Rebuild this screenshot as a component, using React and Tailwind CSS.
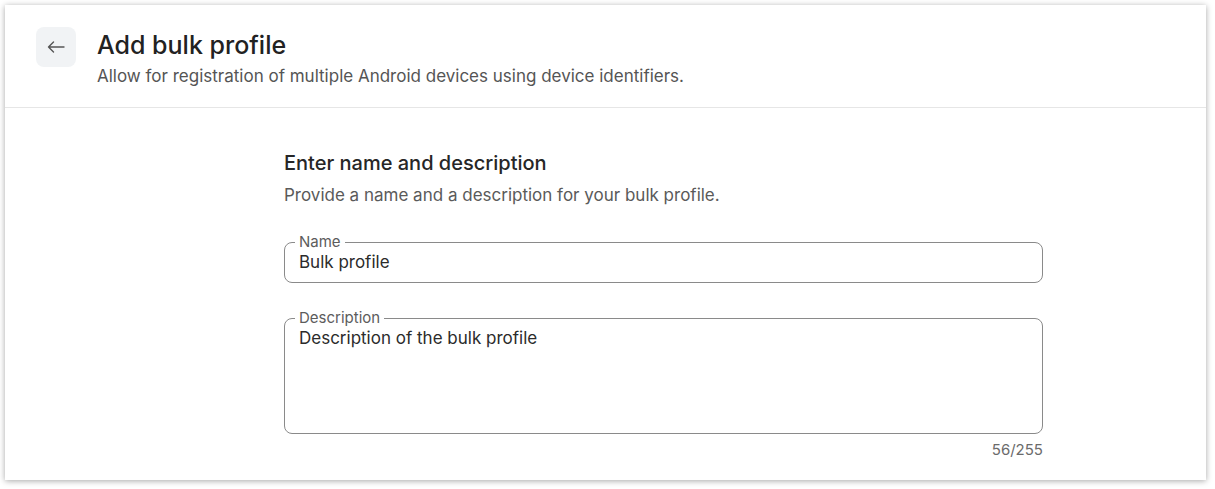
import React from 'react';

function OutlinedField({ label, value, multiline }) {
  return (
    <fieldset className="border border-[#8a8a8a] rounded-lg px-[14px] m-0">
      <legend className="px-[4px] -ml-[4px] text-[15px] leading-[14px] text-[#5c5c5c]">{label}</legend>
      <div className={`text-[17px] leading-6 text-[#2b2b2b] pt-[1px] ${multiline ? 'h-[108px]' : 'h-[33px]'}`}>
        {value}
      </div>
    </fieldset>
  );
}

export default function App() {
  return (
    <div className="min-h-screen bg-white p-[5px] pr-[9px]" style={{ fontFamily: 'Inter, "Noto Sans", sans-serif' }}>
      <div className="bg-white h-[475px] shadow-[0_1px_6px_rgba(0,0,0,0.35)]">
        {/* header */}
        <div className="flex items-start gap-[21px] px-[31px] pt-[22px] pb-[19px] border-b border-[#e6e6e6]">
          <button className="w-10 h-10 rounded-lg bg-[#f1f3f5] flex items-center justify-center shrink-0">
            <svg width="18" height="12" viewBox="0 0 18 12" fill="none" stroke="#555" strokeWidth="1.4" strokeLinecap="round" strokeLinejoin="round">
              <path d="M17 6H1.5M6.5 1L1.5 6l5 5" />
            </svg>
          </button>
          <div>
            <h1 className="text-[25px] leading-8 font-medium text-[#222] mt-[2px]">Add bulk profile</h1>
            <p className="text-[17px] leading-6 text-[#555] mt-[3px]">
              Allow for registration of multiple Android devices using device identifiers.
            </p>
          </div>
        </div>

        {/* form */}
        <div className="ml-[279px] w-[759px] pt-[41px]">
          <h2 className="text-[20px] leading-7 font-medium text-[#262626]">Enter name and description</h2>
          <p className="text-[17px] leading-6 text-[#5a5a5a] mt-[6px]">
            Provide a name and a description for your bulk profile.
          </p>

          <div className="mt-[28px]">
            <OutlinedField label="Name" value="Bulk profile" />
          </div>
          <div className="mt-[28px]">
            <OutlinedField label="Description" value="Description of the bulk profile" multiline />
          </div>
          <div className="text-right text-[15px] leading-5 text-[#6b6b6b] mt-[6px]">56/255</div>
        </div>
      </div>
    </div>
  );
}
